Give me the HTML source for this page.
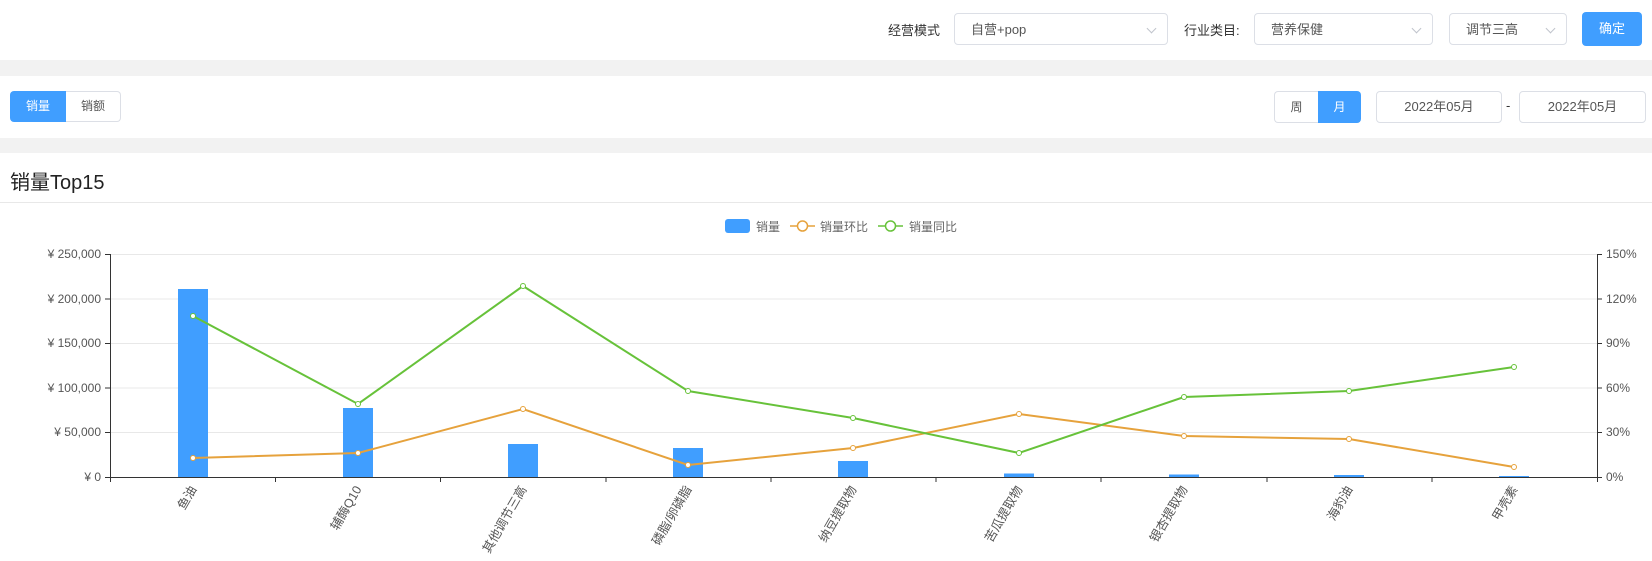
<!DOCTYPE html>
<html><head><meta charset="utf-8"><style>
*{margin:0;padding:0;box-sizing:border-box}
body{width:1652px;height:561px;background:#fff;font-family:"Liberation Sans","Noto Sans CJK SC",sans-serif;position:relative;overflow:hidden;color:#333}
.abs{position:absolute}
.gray{position:absolute;left:0;width:1652px;background:#f2f2f2}
.sel{position:absolute;border:1px solid #dcdfe6;border-radius:4px;background:#fff;font-size:13px;color:#555;line-height:31px;padding-left:16px}
.sel .arr{position:absolute;right:12px;top:11px;width:7px;height:7px;border-right:1px solid #c0c4cc;border-bottom:1px solid #c0c4cc;transform:rotate(45deg)}
.lbl{position:absolute;font-size:13px;color:#333}
.btn{position:absolute;font-size:12px;text-align:center}
</style></head><body>
<div class="lbl" style="left:888px;top:20px">经营模式</div>
<div class="sel" style="left:954px;top:13px;width:214px;height:32px">自营+pop<span class="arr"></span></div>
<div class="lbl" style="left:1184px;top:20px">行业类目:</div>
<div class="sel" style="left:1254px;top:13px;width:179px;height:32px">营养保健<span class="arr"></span></div>
<div class="sel" style="left:1449px;top:13px;width:118px;height:32px;padding-left:16px">调节三高<span class="arr"></span></div>
<div class="btn" style="left:1582px;top:12px;width:60px;height:34px;line-height:34px;background:#409eff;color:#fff;border-radius:4px;font-size:13px">确定</div>
<div class="gray" style="top:60px;height:16px"></div>
<div class="btn" style="left:10px;top:91px;width:56px;height:31px;line-height:31px;background:#409eff;color:#fff;border-radius:4px 0 0 4px">销量</div>
<div class="btn" style="left:66px;top:91px;width:55px;height:31px;line-height:29px;border:1px solid #dcdfe6;border-left:none;color:#555;border-radius:0 4px 4px 0">销额</div>
<div class="btn" style="left:1274px;top:91px;width:44px;height:32px;line-height:30px;border:1px solid #dcdfe6;border-right:none;border-radius:4px 0 0 4px;color:#555">周</div>
<div class="btn" style="left:1318px;top:91px;width:43px;height:32px;line-height:32px;background:#409eff;color:#fff;border-radius:0 4px 4px 0">月</div>
<div class="btn" style="left:1376px;top:91px;width:126px;height:32px;line-height:30px;border:1px solid #dcdfe6;border-radius:4px;color:#555;font-size:13px">2022年05月</div>
<div class="abs" style="left:1506px;top:98px;font-size:13px">-</div>
<div class="btn" style="left:1519px;top:91px;width:127px;height:32px;line-height:30px;border:1px solid #dcdfe6;border-radius:4px;color:#555;font-size:13px">2022年05月</div>
<div class="gray" style="top:138px;height:15px"></div>
<div class="abs" style="left:10px;top:166px;font-size:20px;color:#222">销量Top15</div>
<div class="abs" style="left:0;top:202px;width:1652px;height:1px;background:#e8e8e8"></div>
<svg class="abs" style="left:0;top:0" width="1652" height="561">
<g font-size="12" fill="#666">
<rect x="725" y="219" width="25" height="14" rx="3" fill="#409eff"/><text x="756" y="231">销量</text>
<line x1="790" y1="226" x2="815" y2="226" stroke="#e6a23c" stroke-width="1.5"/><circle cx="802.5" cy="226" r="5" fill="#fff" stroke="#e6a23c" stroke-width="1.5"/><text x="820" y="231">销量环比</text>
<line x1="878" y1="226" x2="903" y2="226" stroke="#67c23a" stroke-width="1.5"/><circle cx="890.5" cy="226" r="5" fill="#fff" stroke="#67c23a" stroke-width="1.5"/><text x="909" y="231">销量同比</text>
</g>
<g stroke="#e8e8e8">
<line x1="110" y1="254.5" x2="1597" y2="254.5"/><line x1="110" y1="299" x2="1597" y2="299"/><line x1="110" y1="343.5" x2="1597" y2="343.5"/><line x1="110" y1="388" x2="1597" y2="388"/><line x1="110" y1="432.5" x2="1597" y2="432.5"/>
</g>
<g stroke="#333" fill="none">
<line x1="110.5" y1="254" x2="110.5" y2="477"/><line x1="1597.5" y1="254" x2="1597.5" y2="477"/>
<line x1="105" y1="477.5" x2="1602" y2="477.5"/>
<path d="M105 254.5h5M105 299h5M105 343.5h5M105 388h5M105 432.5h5M1597 254.5h5M1597 299h5M1597 343.5h5M1597 388h5M1597 432.5h5"/>
<path d="M110.5 477v5M275.5 477v5M440.5 477v5M606 477v5M771 477v5M936 477v5M1101 477v5M1267 477v5M1432 477v5M1597.5 477v5"/>
</g>
<g font-size="12" fill="#555" text-anchor="end">
<text x="101" y="258">¥ 250,000</text><text x="101" y="303">¥ 200,000</text><text x="101" y="347">¥ 150,000</text><text x="101" y="392">¥ 100,000</text><text x="101" y="436">¥ 50,000</text><text x="101" y="481">¥ 0</text>
</g>
<g font-size="12" fill="#555">
<text x="1606" y="258">150%</text><text x="1606" y="303">120%</text><text x="1606" y="347">90%</text><text x="1606" y="392">60%</text><text x="1606" y="436">30%</text><text x="1606" y="481">0%</text>
</g>
<g fill="#409eff">
<rect x="178" y="289" width="30" height="188"/><rect x="343" y="408" width="30" height="69"/><rect x="508" y="444" width="30" height="33"/><rect x="673" y="448" width="30" height="29"/><rect x="838" y="461" width="30" height="16"/><rect x="1004" y="473.5" width="30" height="3.5"/><rect x="1169" y="474.5" width="30" height="2.5"/><rect x="1334" y="475" width="30" height="2"/><rect x="1499" y="476" width="30" height="1"/>
</g>
<polyline fill="none" stroke="#e6a23c" stroke-width="2" points="193,458 358,453 523,409 688,465 853,448 1019,414 1184,436 1349,439 1514,467"/>
<polyline fill="none" stroke="#67c23a" stroke-width="2" points="193,316 358,404 523,286 688,391 853,418 1019,453 1184,397 1349,391 1514,367"/>
<g fill="#fff" stroke="#e6a23c" stroke-width="1"><circle cx="193" cy="458" r="2.5"/><circle cx="358" cy="453" r="2.5"/><circle cx="523" cy="409" r="2.5"/><circle cx="688" cy="465" r="2.5"/><circle cx="853" cy="448" r="2.5"/><circle cx="1019" cy="414" r="2.5"/><circle cx="1184" cy="436" r="2.5"/><circle cx="1349" cy="439" r="2.5"/><circle cx="1514" cy="467" r="2.5"/></g>
<g fill="#fff" stroke="#67c23a" stroke-width="1"><circle cx="193" cy="316" r="2.5"/><circle cx="358" cy="404" r="2.5"/><circle cx="523" cy="286" r="2.5"/><circle cx="688" cy="391" r="2.5"/><circle cx="853" cy="418" r="2.5"/><circle cx="1019" cy="453" r="2.5"/><circle cx="1184" cy="397" r="2.5"/><circle cx="1349" cy="391" r="2.5"/><circle cx="1514" cy="367" r="2.5"/></g>
<g font-size="12.5" fill="#555" text-anchor="end">
<text transform="translate(197,489) rotate(-60)">鱼油</text>
<text transform="translate(362,489) rotate(-60)">辅酶Q10</text>
<text transform="translate(527,489) rotate(-60)">其他调节三高</text>
<text transform="translate(692,489) rotate(-60)">磷脂/卵磷脂</text>
<text transform="translate(857,489) rotate(-60)">纳豆提取物</text>
<text transform="translate(1023,489) rotate(-60)">苦瓜提取物</text>
<text transform="translate(1188,489) rotate(-60)">银杏提取物</text>
<text transform="translate(1353,489) rotate(-60)">海豹油</text>
<text transform="translate(1518,489) rotate(-60)">甲壳素</text>
</g>
</svg>
</body></html>
